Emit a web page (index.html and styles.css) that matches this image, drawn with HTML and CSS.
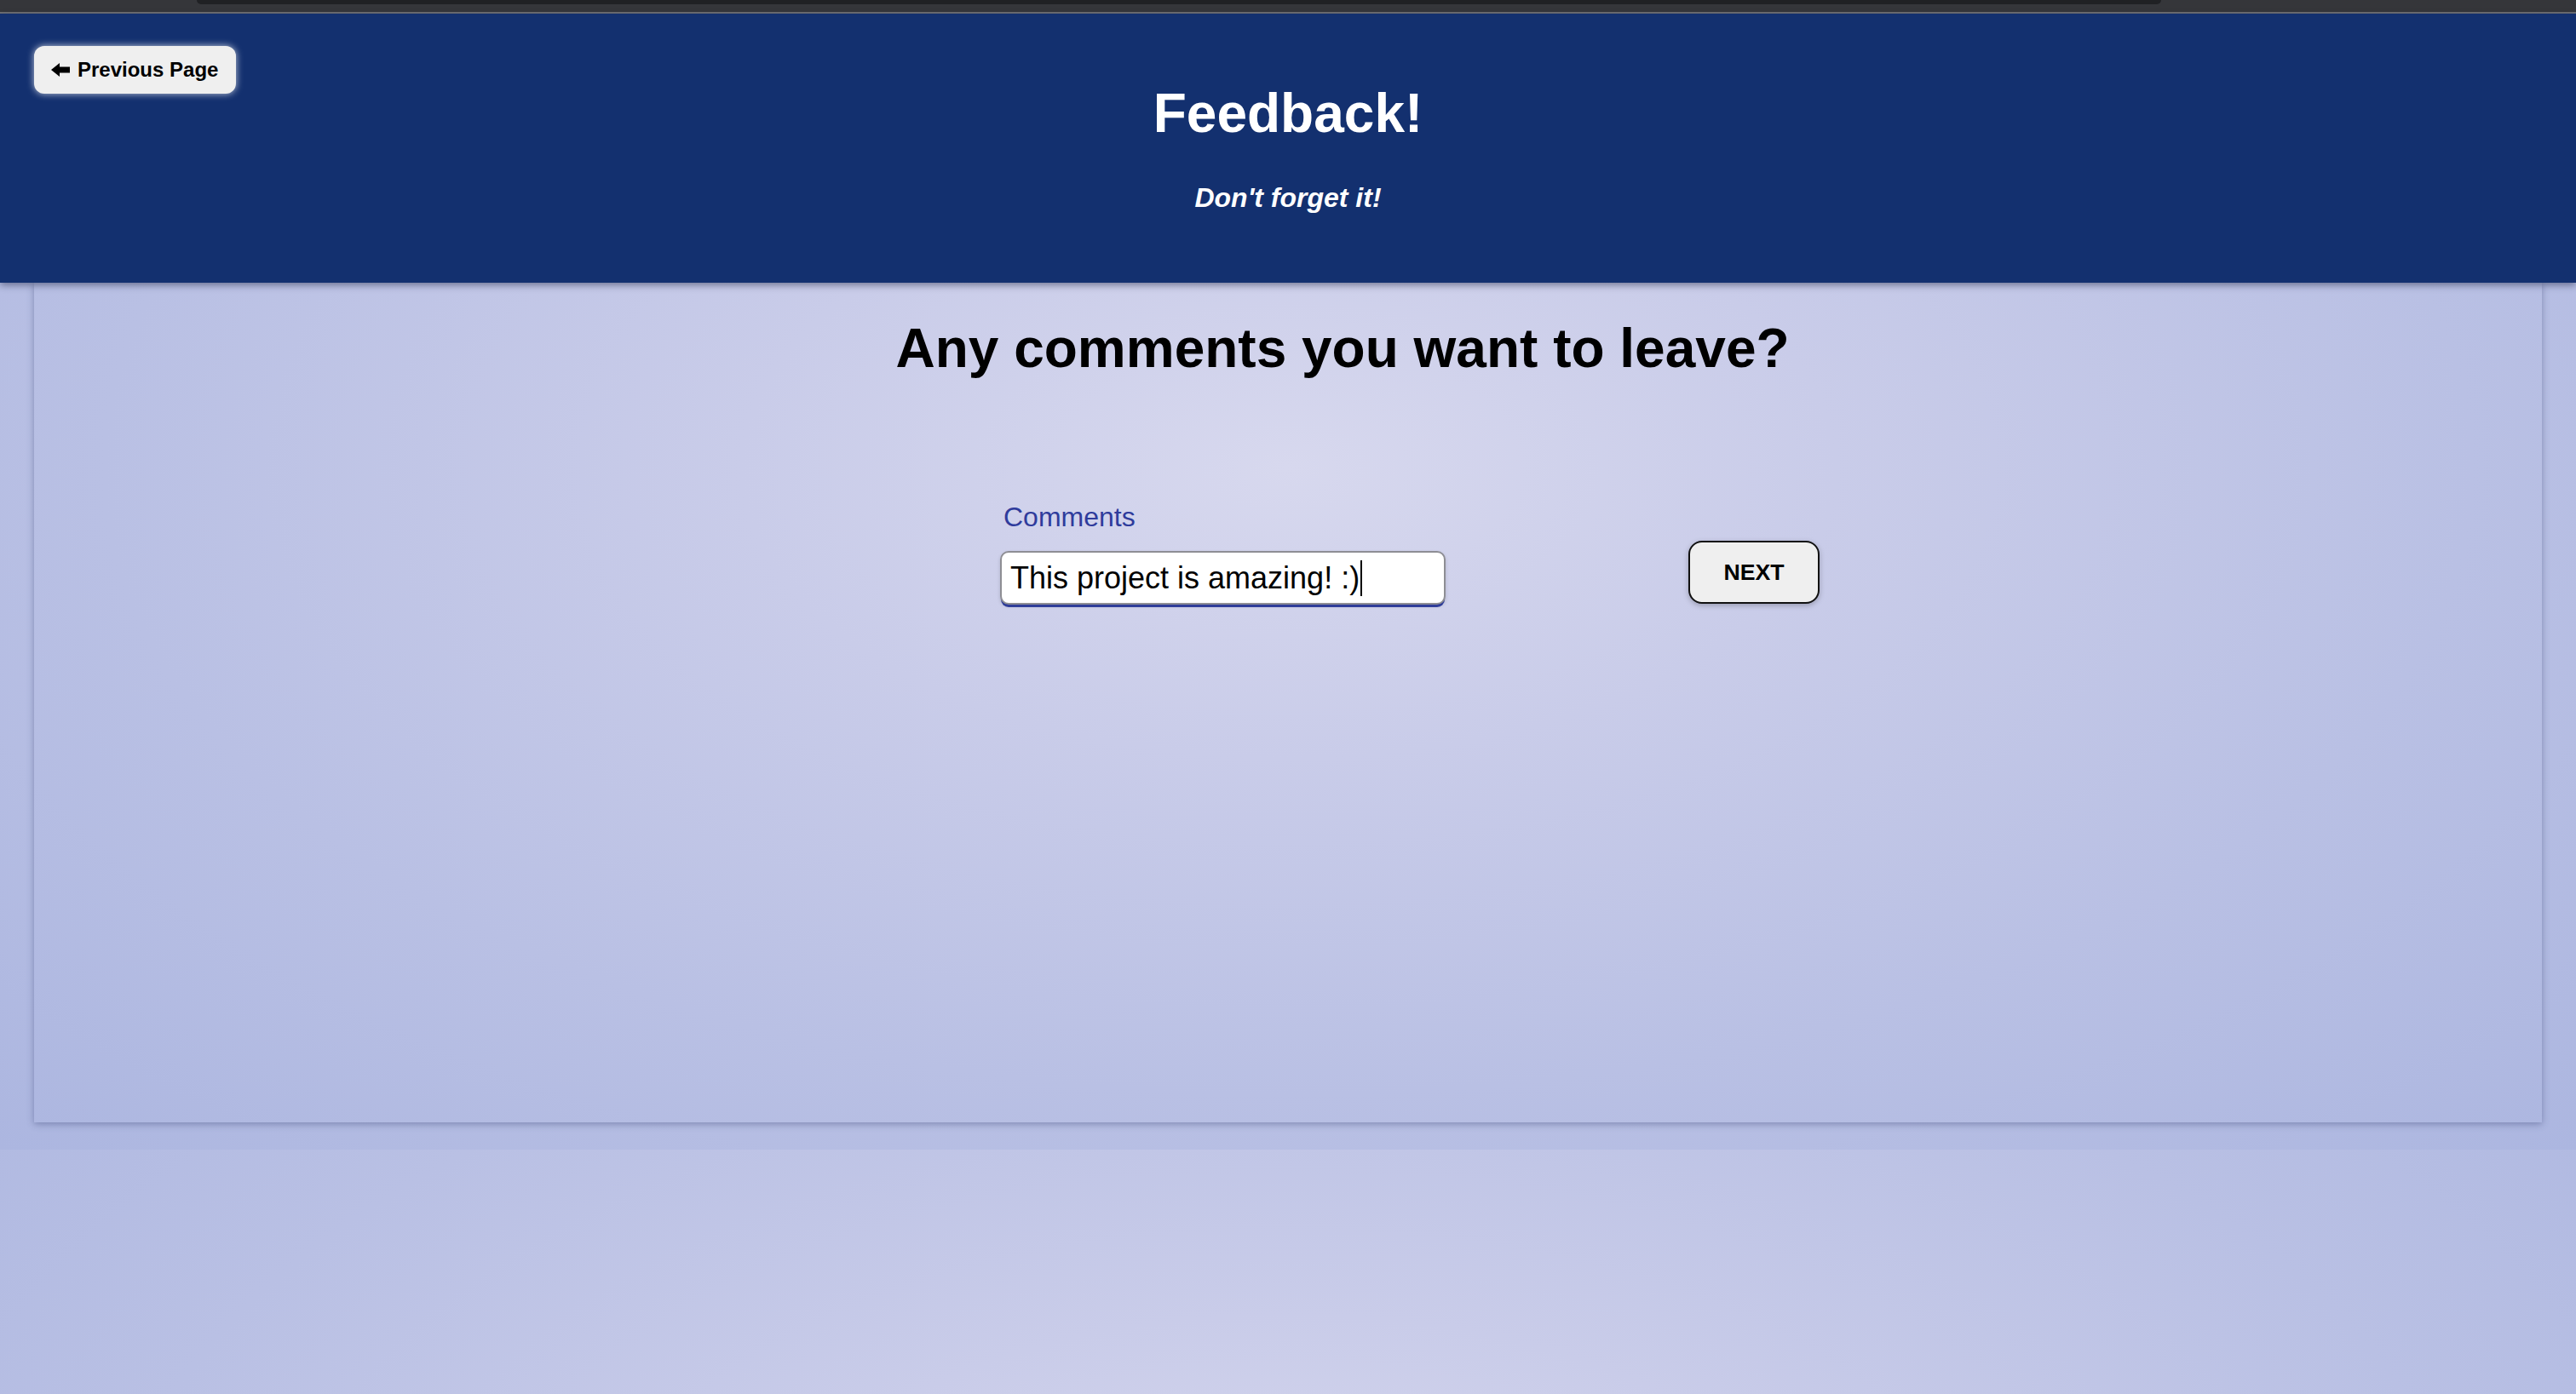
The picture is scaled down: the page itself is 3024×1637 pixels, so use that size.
FILE: index.html
```html
<!DOCTYPE html>
<html lang="en">
<head>
<meta charset="utf-8">
<title>Feedback!</title>
<link rel="stylesheet" href="styles.css">
</head>
<body>
<div class="chrome"><div class="chrome-tab"></div></div>
<div class="page">
  <header class="hero">
    <div class="hero-left">
      <button class="back-btn" type="button">
        <svg class="back-icon" width="22" height="16" viewBox="0 0 22 16" aria-hidden="true"><path d="M0 8 L10 0 L10 4.5 L22 4.5 L22 11.5 L10 11.5 L10 16 Z" fill="#000"/></svg>
        <span>Previous Page</span>
      </button>
    </div>
    <div class="hero-center">
      <h1 class="hero-title">Feedback!</h1>
      <p class="hero-sub">Don't forget it!</p>
    </div>
    <div class="hero-right"></div>
  </header>
  <main class="card">
    <h2 class="question">Any comments you want to leave?</h2>
    <div class="form-row">
      <div class="field">
        <label class="field-label">Comments</label>
        <div class="field-input">This project is amazing! :)<span class="caret"></span></div>
      </div>
      <button class="next-btn" type="button">NEXT</button>
    </div>
  </main>
</div>
</body>
</html>
```
FILE: styles.css
```css
* { box-sizing: border-box; }
html, body { margin: 0; padding: 0; }
body {
  font-family: "Liberation Sans", Arial, Helvetica, sans-serif;
  background: #36373b;
  height: 1637px;
  overflow: hidden;
}
.chrome {
  height: 16px;
  background: #35363a;
  border-bottom: 2px solid #707073;
  position: relative;
}
.chrome-tab {
  margin-left: 231px;
  width: 2306px;
  height: 5px;
  background: #202124;
  border-radius: 0 0 12px 12px;
}
.page {
  height: 1621px;
  background-image: radial-gradient(ellipse farthest-corner at 50% 40%, #d7d8ee 0%, #c9cce9 30%, #b9c0e4 65%, #acb6e0 100%);
  background-size: 100% 1334px;
  background-repeat: repeat-y;
  position: relative;
}
.hero {
  position: relative;
  z-index: 2;
  height: 316px;
  background: #13306f;
  box-shadow: 0 3px 8px rgba(10, 20, 50, 0.45);
  display: grid;
  grid-template-columns: 1fr auto 1fr;
  align-items: start;
}
.hero-left { padding: 38px 0 0 40px; }
.back-btn {
  display: inline-flex;
  align-items: center;
  gap: 9px;
  height: 56px;
  padding: 0 21px 0 20px;
  border: none;
  border-radius: 12px;
  background: #efefef;
  color: #000;
  font-family: "Liberation Sans", Arial, Helvetica, sans-serif;
  font-weight: bold;
  font-size: 24px;
  box-shadow: 0 0 8px rgba(255, 255, 255, 0.75);
}
.back-icon { display: block; }
.hero-center { text-align: center; padding-top: 80px; color: #fff; }
.hero-title {
  margin: 0;
  font-size: 64px;
  line-height: 74px;
  font-weight: bold;
}
.hero-sub {
  margin: 44px 0 0;
  font-size: 32px;
  line-height: 37px;
  font-weight: bold;
  font-style: italic;
}
.card {
  position: relative;
  z-index: 1;
  margin: 0 40px;
  height: 986px;
  padding: 40px 0 0 128px;
  box-shadow: 0 2px 8px rgba(60, 70, 120, 0.45);
}
.question {
  margin: 0;
  text-align: center;
  font-size: 64px;
  line-height: 74px;
  font-weight: bold;
  color: #000;
}
.form-row {
  margin-top: 143px;
  margin-left: -128px;
  padding-left: 286px;
  display: flex;
  justify-content: center;
  align-items: flex-start;
  gap: 285px;
}
.field { display: flex; flex-direction: column; width: 523px; }
.field-label {
  padding-left: 4px;
  font-size: 32px;
  line-height: 37px;
  color: #2f3c9c;
}
.field-input {
  margin-top: 21px;
  height: 63px;
  padding: 0 10px;
  display: flex;
  align-items: center;
  background: #fff;
  border: 2px solid #8e8e94;
  border-radius: 10px;
  box-shadow: 0 4px 0 -1px #2f3d99, 0 2px 4px rgba(0,0,0,0.15);
  font-size: 36px;
  color: #000;
  white-space: pre;
}
.caret {
  display: inline-block;
  width: 2px;
  height: 42px;
  background: #000;
  margin-left: 1px;
}
.next-btn {
  margin-top: 46px;
  width: 154px;
  height: 74px;
  background: #efefef;
  border: 2px solid #111;
  border-radius: 16px;
  font-family: "Liberation Sans", Arial, Helvetica, sans-serif;
  font-size: 26.67px;
  font-weight: bold;
  color: #000;
  box-shadow: 0 2px 6px rgba(0, 0, 0, 0.25);
}
```
